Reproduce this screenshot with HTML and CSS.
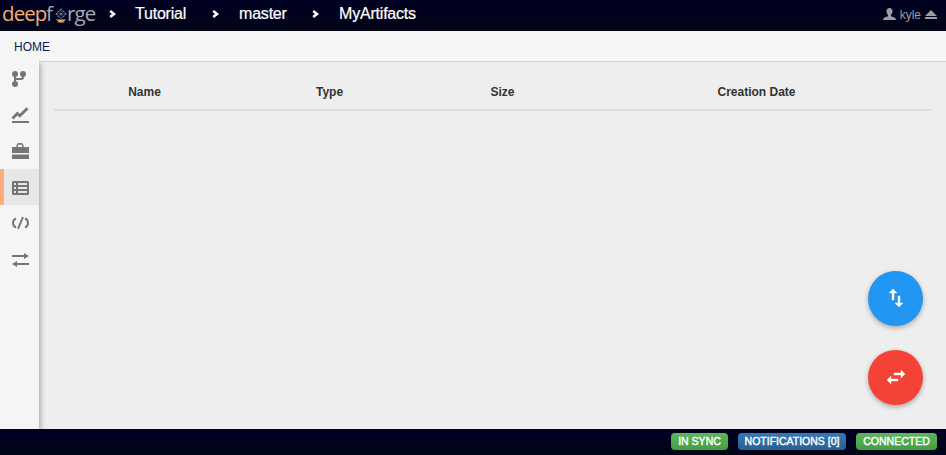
FILE: index.html
```html
<!DOCTYPE html>
<html lang="en">
<head>
<meta charset="utf-8">
<title>deepforge</title>
<link rel="stylesheet" href="styles.css">
</head>
<body>
<header class="topbar">
  <div class="logo"><span class="deep">deep</span><span class="eff">f</span><svg class="forge" width="12" height="15" viewBox="0 0 12 15"><g fill="none" stroke="#59677d" stroke-width=".6"><path d="M6 1 11 6 6 11 1 6zM3.500 3.500l5 5M8.500 3.500l-5 5M1 6h10M6 1v10"/></g><g fill="#77859a"><circle cx="6" cy="1.500" r=".9"/><circle cx="1.500" cy="6" r=".9"/><circle cx="10.500" cy="6" r=".9"/><circle cx="3.500" cy="3.500" r=".8"/><circle cx="8.500" cy="3.500" r=".8"/><circle cx="3.500" cy="8.500" r=".8"/><circle cx="8.500" cy="8.500" r=".8"/><circle cx="6" cy="6" r=".9"/></g><path d="M1 11.500h10q-1 2-3 1.800l2 1.200H2l2-1.200q-2 .2-3-1.800z" fill="#e5a572"/></svg><span class="rge">rge</span></div>
  <nav class="crumbs">
    <svg class="chev" viewBox="0 0 7 8"><path d="M1.200 1 5 4 1.200 7"/></svg><span class="c1">Tutorial</span>
    <svg class="chev" viewBox="0 0 7 8"><path d="M1.200 1 5 4 1.200 7"/></svg><span class="c2">master</span>
    <svg class="chev" viewBox="0 0 7 8"><path d="M1.200 1 5 4 1.200 7"/></svg><span class="c3">MyArtifacts</span>
  </nav>
  <div class="user">
    <svg width="13" height="12" viewBox="0 0 13 12"><path d="M6.500 0C8.500 0 9.700 1.200 9.500 3.500 9.400 5.300 8.800 6.200 8 7v1.300l3.500 1.200Q13 10 13 12H0q0-2 1.500-2.500L5 8.300V7C4.200 6.200 3.600 5.300 3.500 3.500 3.300 1.200 4.500 0 6.500 0z"/></svg>
    <span>kyle</span>
    <svg width="12" height="9" viewBox="0 0 12 9"><path d="M6 0 12 6H0zM0 7h12v2H0z"/></svg>
  </div>
</header>
<div class="subbar">HOME</div>
<div class="body">
  <aside class="side">
    <div class="item"><svg width="16" height="18" viewBox="0 0 16 18"><g fill="#757575"><circle cx="4" cy="4" r="3"/><circle cx="12" cy="4" r="3"/><circle cx="4" cy="14" r="3"/></g><path d="M4 3v11M12 4v3.300q0 1.700-1.700 1.700H4" fill="none" stroke="#757575" stroke-width="2"/></svg></div>
    <div class="item"><svg width="18" height="18" viewBox="0 0 18 18"><path d="M1.500 12.500 6.300 7.500l2.500 2.300L16.500 2.300" fill="none" stroke="#757575" stroke-width="2.800"/><path d="M1 15h17v2H1z"/></svg></div>
    <div class="item"><svg width="18" height="18" viewBox="0 0 18 18"><path d="M1 5h4.500V3L7 1h4l1.500 2v2H18v6H1zM7 5h4V2.800H7zM1 12.500h17V17H1z" fill-rule="evenodd"/></svg></div>
    <div class="item active low"><svg width="18" height="18" viewBox="0 0 18 18"><path d="M2.500 2h14Q18 2 18 3.500v11q0 1.500-1.500 1.500h-14Q1 16 1 14.500v-11Q1 2 2.500 2zM3 4v2h2V4zM7 4v2h9V4zM3 8v2h2V8zM7 8v2h9V8zM3 12v2h2v-2zM7 12v2h9v-2z" fill-rule="evenodd"/></svg></div>
    <div class="item"><svg width="18" height="14" viewBox="0 0 18 14"><path d="M5 2.500Q2 3.500 2 7t3 4.500M14 2.500Q17 3.500 17 7t-3 4.500M12 1.200 7 12.800" fill="none" stroke="#757575" stroke-width="1.900"/></svg></div>
    <div class="item low"><svg width="18" height="14" viewBox="0 0 18 14"><path d="M1 2h12V0l5 3-5 3V4H1zM18 10H6V8l-5 3 5 3v-2h12z"/></svg></div>
  </aside>
  <main class="main">
    <table class="list">
      <thead><tr><th class="name">Name</th><th class="type">Type</th><th class="size">Size</th><th class="date">Creation Date</th></tr></thead>
    </table>
    <div class="fabs">
      <div class="fab blue"><svg width="24" height="24" viewBox="0 0 24 24"><path d="M16 17.010V10h-2v7.010h-3L15 21l4-3.990h-3zM9 3L5 6.990h3V14h2V6.990h3L9 3z"/></svg></div>
      <div class="fab red"><svg width="24" height="24" viewBox="0 0 24 24"><path d="M6.990 11L3 15l3.990 4v-3H14v-2H6.990v-3zM21 9l-3.990-4v3H10v2h7.010v3L21 9z"/></svg></div>
    </div>
  </main>
</div>
<footer class="status"><span class="label w1">IN SYNC</span><span class="label info w2">NOTIFICATIONS [0]</span><span class="label w3">CONNECTED</span></footer>
</body>
</html>
```
FILE: styles.css
```css
* { box-sizing: border-box; }
body {
  margin: 0;
  height: 455px;
  display: flex;
  flex-direction: column;
  overflow: hidden;
  font-family: "Liberation Sans", Arial, sans-serif;
  font-size: 12px;
  color: #333;
  background: #eee;
}
svg { display: block; flex: none; }
.topbar {
  height: 31px;
  flex: none;
  display: flex;
  align-items: center;
  background: linear-gradient(#000022, #020617);
  color: #fff;
}
.logo {
  display: flex;
  width: 95px;
  margin-left: 2px;
  margin-right: 1px;
  font: 400 20.5px/26px "Open Sans", sans-serif;
  letter-spacing: -0.9px;
  color: #a3abb0;
  padding-bottom: 5px;
}
.deep { width: 44px; color: #f4ae78; }
.eff { width: 7px; }
.forge { margin: 8px 0 0 2px; }
.rge { margin-left: 0; }
.crumbs {
  display: flex;
  align-items: center;
  font-size: 16px;
  line-height: 18px;
  letter-spacing: -0.2px;
  padding-bottom: 3px;
  -webkit-text-stroke: .2px #fff;
}
.chev {
  width: 7px;
  height: 8px;
  margin-left: 11px;
  fill: none;
  stroke: #fff;
  stroke-width: 2.5;
}
.crumbs span { margin-left: 19px; }
.c1 { width: 66px; }
.c2 { width: 62px; }
.crumbs .c2, .crumbs .c3 { margin-left: 20px; }
.user {
  margin-left: auto;
  padding: 0 9px 3px 0;
  display: flex;
  align-items: center;
  gap: 4px;
  color: #9d9d9d;
}
.user svg { fill: #9d9d9d; }
.user span { padding-top: 2px; }
.subbar {
  height: 31px;
  flex: none;
  padding: 1px 14px 0;
  line-height: 30px;
  color: #0a2052;
  background: #f5f5f5;
  border-bottom: 1px solid #d5d5d5;
}
.body { flex: 1; display: flex; min-height: 0; }
.side {
  width: 39px;
  margin-top: -1px;
  background: #f5f5f5;
  box-shadow: 1px 2px 6px rgba(0, 0, 0, .35);
  clip-path: inset(0 -12px 0 0);
}
.item {
  height: 36px;
  display: flex;
  align-items: center;
  padding-left: 11px;
}
.item svg { fill: #757575; }
.low { padding-top: 2px; }
.active {
  background: #e7e7e7;
  border-left: 4px solid #ffab7c;
  padding-left: 7px;
}
.main {
  flex: 1;
  padding: 11px 14px 0 15px;
  display: flex;
  flex-direction: column;
}
.list {
  width: 878px;
  table-layout: fixed;
  border-collapse: collapse;
}
.list th {
  height: 37px;
  padding: 2px 0 0;
  border-bottom: 2px solid #ddd;
  font-weight: bold;
}
.name { width: 181px; }
.type { width: 189px; }
.size { width: 157px; }
.date { width: 351px; }
.fabs {
  margin: auto 9px 24px auto;
  display: flex;
  flex-direction: column;
  gap: 24px;
}
.fab {
  width: 55px;
  height: 55px;
  border-radius: 50%;
  display: flex;
  align-items: center;
  justify-content: center;
  padding: 0 0 1px 1px;
  box-shadow: 0 2px 5px rgba(0, 0, 0, .3);
}
.fab svg { fill: #fff; stroke: #fff; stroke-width: .4; }
.blue { background: #2196f3; }
.red { background: #f44336; }
.status {
  height: 26px;
  flex: none;
  display: flex;
  justify-content: flex-end;
  align-items: flex-start;
  gap: 10px;
  padding: 4px 9px 0;
  background: linear-gradient(#000022, #020617);
}
.label {
  height: 17px;
  border-radius: 4px;
  line-height: 17px;
  text-align: center;
  font-size: 10.5px;
  -webkit-text-stroke: .4px #fff;
  color: #fff;
  white-space: nowrap;
  background: linear-gradient(#5cb85c, #449d44);
}
.info { background: linear-gradient(#337ab7, #286090); }
.w1 { width: 57px; }
.w2 { width: 108px; }
.w3 { width: 81px; }
```
